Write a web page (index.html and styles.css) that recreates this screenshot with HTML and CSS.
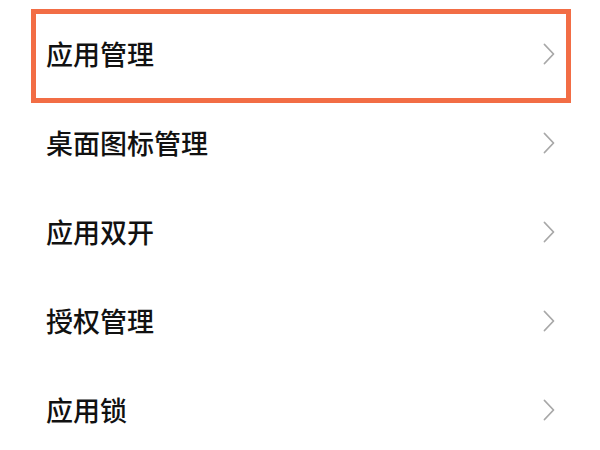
FILE: index.html
```html
<!DOCTYPE html>
<html lang="zh">
<head>
<meta charset="utf-8">
<link rel="stylesheet" href="styles.css">
</head>
<body>
<div class="list">
  <div class="highlight"></div>
  <div class="row"><span class="label">应用管理</span><svg class="chev" viewBox="0 0 12 22" width="12" height="22"><polyline points="1.5,1.5 10.5,11 1.5,20.5"/></svg></div>
  <div class="row"><span class="label">桌面图标管理</span><svg class="chev" viewBox="0 0 12 22" width="12" height="22"><polyline points="1.5,1.5 10.5,11 1.5,20.5"/></svg></div>
  <div class="row"><span class="label">应用双开</span><svg class="chev" viewBox="0 0 12 22" width="12" height="22"><polyline points="1.5,1.5 10.5,11 1.5,20.5"/></svg></div>
  <div class="row"><span class="label">授权管理</span><svg class="chev" viewBox="0 0 12 22" width="12" height="22"><polyline points="1.5,1.5 10.5,11 1.5,20.5"/></svg></div>
  <div class="row"><span class="label">应用锁</span><svg class="chev" viewBox="0 0 12 22" width="12" height="22"><polyline points="1.5,1.5 10.5,11 1.5,20.5"/></svg></div>
</div>
</body>
</html>
```
FILE: styles.css
```css
html, body {
  margin: 0;
  padding: 0;
  background: #ffffff;
}
body {
  width: 600px;
  height: 450px;
  overflow: hidden;
  font-family: "Noto Sans CJK SC", "Noto Sans", sans-serif;
}
.list {
  position: relative;
  padding-top: 9px;
}
.highlight {
  position: absolute;
  top: 9px;
  left: 31px;
  width: 530px;
  height: 84px;
  border: 5px solid #f26d45;
}
.row {
  height: 89px;
  display: flex;
  align-items: center;
  justify-content: space-between;
  padding: 0 45px 0 46px;
}
.label {
  font-size: 27px;
  font-weight: 500;
  color: #111111;
  line-height: 1;
}
.chev {
  display: block;
  fill: none;
  stroke: #a8a8a8;
  stroke-width: 1.8;
  stroke-linecap: round;
  stroke-linejoin: round;
}
```
